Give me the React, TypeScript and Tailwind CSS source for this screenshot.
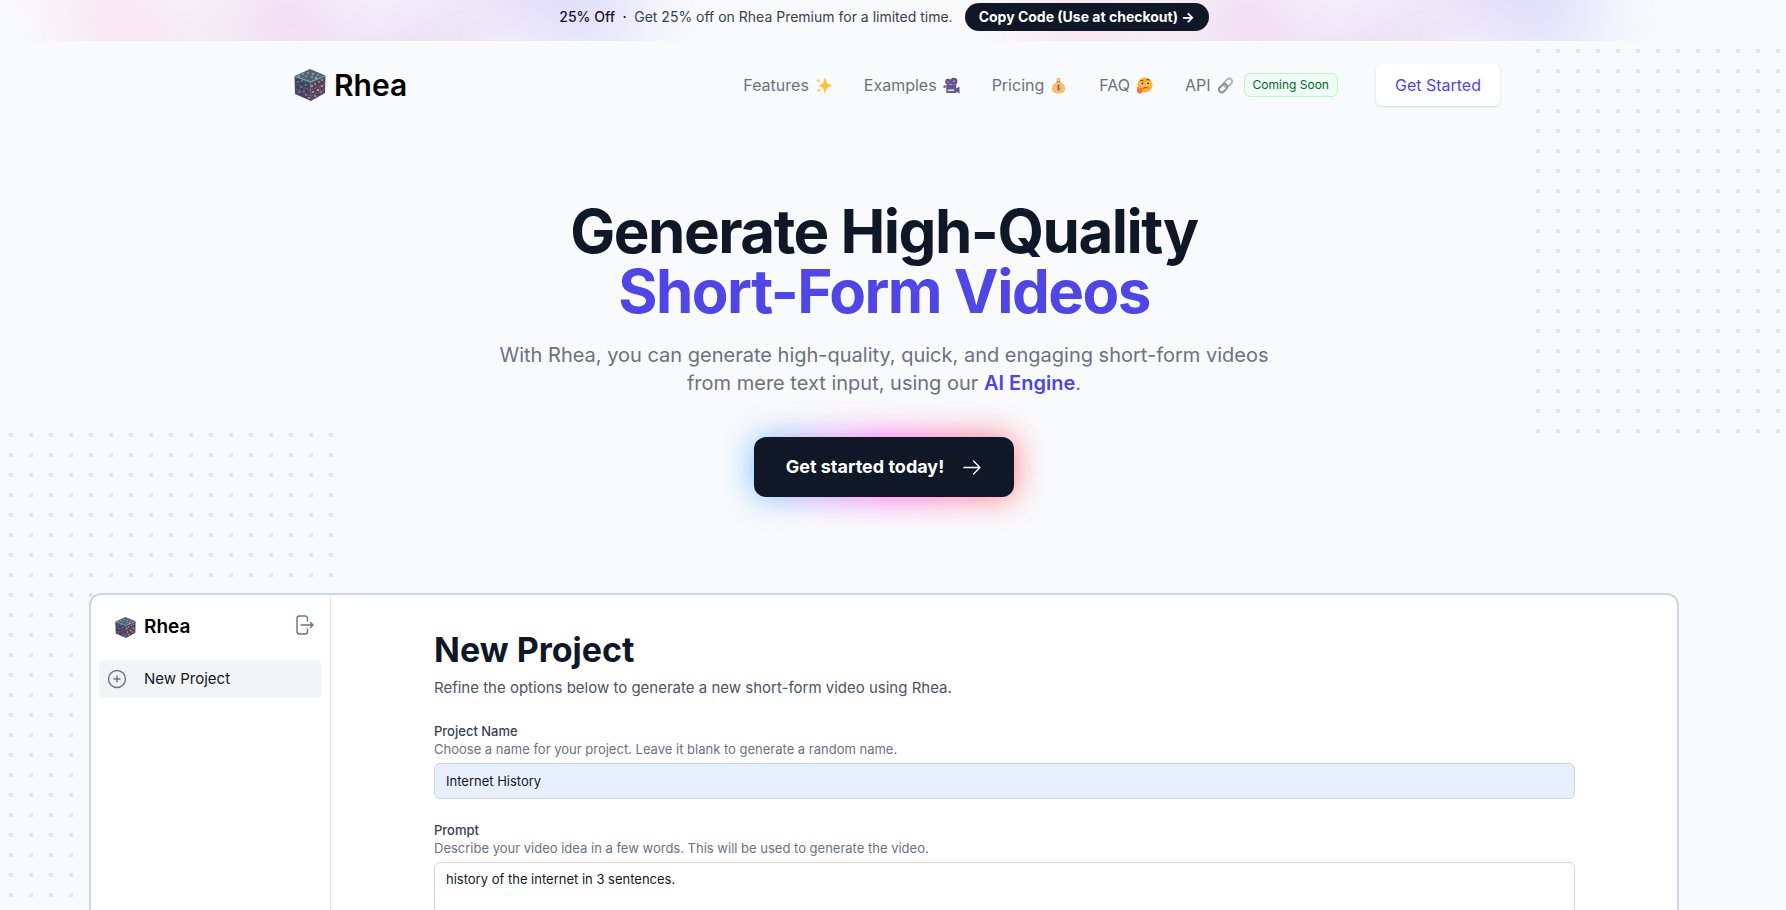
import { useState } from "react";

const blobShape =
    "aspect-[577/310] w-[577px] bg-linear-to-r from-[#ff80b5] to-[#9089fc] opacity-30 [clip-path:polygon(74.8%_41.9%,97.2%_73.2%,100%_34.9%,92.5%_0.4%,87.5%_0%,75%_28.6%,58.5%_54.6%,50.1%_56.8%,46.9%_44%,48.3%_17.4%,24.7%_53.9%,0%_27.9%,11.9%_74.2%,24.9%_54.1%,68.6%_100%,74.8%_41.9%)]";

const sparks = [
    [5, 7, "#6fb3bd"], [9, 5, "#7a9fae"], [14, 4, "#6d97a5"], [19, 5, "#8eb3c0"], [24, 6, "#62a9b5"],
    [12, 7, "#a3788f"], [18, 8, "#68a0b0"], [22, 9, "#9dbfc9"], [4, 13, "#7d6f9c"], [7, 18, "#5c7fa5"],
    [10, 22, "#8d6480"], [5, 23, "#6b7db0"], [12, 16, "#9a7090"], [12, 26, "#7f6fa0"], [18, 17, "#ff9a6b"],
    [21, 15, "#f27d9c"], [25, 13, "#b9808f"], [28, 17, "#ff8f6a"], [19, 23, "#f08ab0"], [24, 21, "#ffab7a"],
    [27, 23, "#c07a9a"], [21, 27, "#e8848a"], [8, 12, "#4c92a8"], [28, 11, "#63b7c2"], [15, 29, "#b97fae"],
] as const;

const Cube = (props: { className: string }) => (
    <svg viewBox="0 0 32 32" className={props.className} aria-hidden="true">
        <path d="M16 0 31.500 6.500 16.500 12.500 .5 7Z" fill="#566470" />
        <path d="M.5 7 16.500 12.500 17 32 1 25Z" fill="#46485f" />
        <path d="M31.500 6.500 16.500 12.500 17 32 31 24Z" fill="#584a63" />
        <path d="M1 7.500 16.500 13 31 7" fill="none" stroke="#6cb3be" strokeWidth="1" />
        <path d="M4 10v12M8 13v13M12 15v13M20 14v14M24 12v14M28 10v14" stroke="#2f3350" strokeWidth="1" />
        <path d="M2 15 16 21M2 20 16 27M31 15 17 21M31 20 17 27" stroke="#6f5c78" strokeWidth="1" />
        {sparks.map(([x, y, fill]) => (
            <circle key={`${x}-${y}`} cx={x} cy={y} r="1.100" fill={fill} />
        ))}
    </svg>
);

const Sparkles = () => (
    <svg viewBox="0 0 18 18" className="size-[17px]" aria-hidden="true">
        <path d="M11 1c.8 5 2 6.500 6.500 7.600v.8C13 10.500 11.800 12 11 17h-.8c-.8-5-2-6.500-5.700-7.600v-.8C8.200 7.500 9.400 6 10.200 1Z" fill="#ffc139" />
        <path d="M3.500 1c.3 1.700.8 2.200 2.500 2.700-1.700.5-2.200 1-2.500 2.700C3.200 4.700 2.700 4.200 1 3.700 2.700 3.200 3.200 2.700 3.500 1ZM4 11.500c.3 1.600.8 2.100 2.300 2.500C4.800 14.400 4.300 14.900 4 16.500c-.3-1.600-.8-2.100-2.300-2.500 1.500-.4 2-.9 2.300-2.500Z" fill="#ffc95a" />
    </svg>
);

const Camera = () => (
    <svg viewBox="0 0 18 18" className="size-[17px]" aria-hidden="true">
        <circle cx="5.500" cy="5" r="3.200" fill="#63518e" />
        <circle cx="11.500" cy="4.500" r="3.800" fill="#63518e" />
        <path d="M3.500 8h10.500v9H3.500ZM.5 9H3v2.500H.5ZM13.500 12.500l4-2.500v7.500l-4-2.500Z" fill="#63518e" />
        <circle cx="5.500" cy="5" r=".9" fill="#a99bc9" />
        <circle cx="11.500" cy="4.500" r="1" fill="#a99bc9" />
        <path d="M5 13h7v2h-7Z" fill="#d6cdea" />
    </svg>
);

const MoneyBag = () => (
    <svg viewBox="0 0 18 18" className="size-[17px]" aria-hidden="true">
        <path d="M7 1.500 9 .5l2 1-.5 3.500c3.500 1.500 5.500 4.500 5.500 7.500 0 3.500-2.500 5-7 5s-7-1.500-7-5C2 9.500 4 6.500 7.500 5Z" fill="#f5bd76" />
        <path d="M7 5h4" stroke="#b9803f" strokeWidth="1.300" />
        <path d="M10.700 9.500c-.5-.6-3-.8-3.200.6 0 1.500 3 .8 3 2.300 0 1.300-2.500 1.300-3.200.4M9 8v6.500" fill="none" stroke="#8a5a3c" strokeWidth=".9" />
    </svg>
);

const Thinking = () => (
    <svg viewBox="0 0 18 18" className="size-[17px]" aria-hidden="true">
        <circle cx="9.500" cy="8.500" r="8" fill="#ffb62e" />
        <path d="M4.500 4.500C5.500 3.500 7 3.500 7.800 4.500M11 3.300c1.200-1 2.700-.8 3.500.4" fill="none" stroke="#7a4a12" strokeWidth="1.100" />
        <ellipse cx="6.500" cy="7.200" rx="1.500" ry="1.700" fill="#fff" />
        <ellipse cx="12.500" cy="7.200" rx="1.500" ry="1.700" fill="#fff" />
        <circle cx="6.700" cy="7" r="1.100" fill="#3d2a1a" />
        <circle cx="12.700" cy="7" r="1.100" fill="#3d2a1a" />
        <path d="M8 11.800c1.500-.9 3-.8 4.500 0" fill="none" stroke="#7a4a12" strokeWidth="1.100" />
        <path d="M1.500 10.500c1-.8 1.800 0 2 1.500l5-.8c1.200 0 1.200 1.400 0 1.700l-2 .5c1.500 2-.5 4.300-3 4.100C1 17.300.5 14 1.500 10.500Z" fill="#f9763a" />
    </svg>
);

const ChainLink = () => (
    <svg viewBox="0 0 18 18" className="size-[17px]" aria-hidden="true">
        <g fill="none" strokeWidth="2">
            <rect x="6.500" y="3.200" width="10" height="6" rx="3" transform="rotate(-45 11.500 6.200)" stroke="#b4b4b4" />
            <rect x="1.500" y="8.800" width="10" height="6" rx="3" transform="rotate(-45 6.500 11.800)" stroke="#8f8f8f" />
        </g>
    </svg>
);

const navigation = [
    { name: "Features", icon: <Sparkles /> },
    { name: "Examples", icon: <Camera /> },
    { name: "Pricing", icon: <MoneyBag /> },
    { name: "FAQ", icon: <Thinking /> },
    { name: "API", icon: <ChainLink /> },
];

const Banner = () => (
    <div className="relative isolate overflow-hidden pt-[3px] pb-2.5 pr-4.5 flex items-center justify-center gap-x-3">
        <div className="absolute left-[calc(50%-841px)] top-1/2 -z-10 -translate-y-1/2 blur-2xl" aria-hidden="true">
            <div className={blobShape} />
        </div>
        <div className="absolute left-[calc(50%+119px)] top-1/2 -z-10 -translate-y-1/2 blur-2xl" aria-hidden="true">
            <div className={blobShape} />
        </div>
        <p className="text-sm text-gray-700">
            <strong className="font-medium text-gray-900">25% Off&nbsp; ·&nbsp; </strong>
            Get 25% off on Rhea Premium for a limited time.
        </p>
        <button className="rounded-full bg-gray-900 px-3.5 py-1 text-sm font-bold text-white">
            Copy Code (Use at checkout) <span aria-hidden="true">→</span>
        </button>
    </div>
);

const Header = () => (
    <header className="mx-auto flex max-w-7xl items-center justify-between pt-[23px] pl-[50px] pr-6">
        <a href="#" className="flex items-center gap-2">
            <Cube className="size-8" />
            <span className="text-3xl font-semibold text-black">Rhea</span>
        </a>
        <nav className="flex items-center gap-8">
            {navigation.map((item) => (
                <a key={item.name} href="#" className="flex items-center gap-1.5 text-gray-500">
                    {item.name}
                    {item.icon}
                    {item.name === "API" && (
                        <span className="ml-1 rounded-md border border-green-200 bg-green-50 px-2 py-0.5 text-xs leading-[18px] text-green-800">
                            Coming Soon
                        </span>
                    )}
                </a>
            ))}
            <a href="#" className="ml-1.5 rounded-md bg-white px-[19px] py-[9px] text-[#4f46e5] shadow-sm">
                Get Started
            </a>
        </nav>
    </header>
);

const Hero = () => (
    <div className="mx-auto flex flex-col items-center pt-[95px] text-center">
        <h1 className="text-6xl font-bold tracking-tight leading-none text-gray-900">
            Generate High-Quality
            <span className="block text-[#4f46e5]">Short-Form Videos</span>
        </h1>
        <p className="mt-5 max-w-[780px] text-xl leading-7 text-gray-500">
            With Rhea, you can generate high-quality, quick, and engaging short-form videos from mere text input, using our{" "}
            <span className="font-semibold text-[#4f46e5]">AI Engine</span>.
        </p>
        <div className="relative mt-10">
            <div className="absolute inset-0 rounded-xl bg-linear-to-r from-[#44bcff] via-[#ff44ec] to-[#ff675e] opacity-90 blur-lg" />
            <a href="#" className="relative flex h-15 items-center gap-4.5 rounded-xl bg-gray-900 px-8 text-lg font-bold text-white">
                Get started today!
                <svg viewBox="0 0 20 20" className="size-5" fill="none" stroke="currentColor" strokeWidth="1.300" strokeLinecap="round" strokeLinejoin="round">
                    <path d="M2 10.500h16M11.500 4l6.500 6.500-6.500 6.500" />
                </svg>
            </a>
        </div>
    </div>
);

const Sidebar = () => (
    <aside className="w-[240px] shrink-0 border-r border-gray-200 px-2 pt-3.5">
        <div className="flex h-9 items-center gap-2 pl-4 pr-[7px]">
            <Cube className="size-[21px]" />
            <span className="grow text-[19px] font-semibold text-black">Rhea</span>
            <button aria-label="Sign out" className="pb-1 text-gray-500">
                <svg viewBox="0 0 20 20" className="size-5" fill="none" stroke="currentColor" strokeWidth="1.400" strokeLinecap="round" strokeLinejoin="round">
                    <path d="M12.500 6V3.500A2.500 2.500 0 0 0 10 1H4.500A2.500 2.500 0 0 0 2 3.500v13A2.500 2.500 0 0 0 4.500 19H10a2.500 2.500 0 0 0 2.500-2.500V14M6 10h12M15.500 7.500 18 10l-2.500 2.500" />
                </svg>
            </button>
        </div>
        <a href="#" className="mt-[15px] flex h-[38px] items-center gap-[17px] rounded-md bg-gray-100 px-2 text-[15px] text-gray-900">
            <svg viewBox="0 0 20 20" className="size-5 text-gray-500" fill="none" stroke="currentColor" strokeWidth="1.400" strokeLinecap="round">
                <circle cx="10" cy="10" r="8.500" />
                <path d="M10 7v6M7 10h6" />
            </svg>
            New Project
        </a>
    </aside>
);

const ProjectForm = () => {
    const [name, setName] = useState("Internet History");
    const [prompt, setPrompt] = useState("history of the internet in 3 sentences.");

    return (
        <main className="grow pl-[103px] pr-[102px] pt-[35px]">
            <h2 className="text-[34px] font-bold leading-10 text-gray-900">New Project</h2>
            <p className="mt-1.5 text-[15px] leading-6 text-gray-600">Refine the options below to generate a new short-form video using Rhea.</p>
            <form className="mt-5.5 flex flex-col gap-[22px]">
                <div className="flex flex-col">
                    <label htmlFor="name" className="text-[13px] leading-[18px] font-medium text-gray-700">Project Name</label>
                    <p className="text-[13px] leading-[18px] text-gray-500">Choose a name for your project. Leave it blank to generate a random name.</p>
                    <input
                        id="name"
                        value={name}
                        onChange={(e) => setName(e.target.value)}
                        className="mt-[5px] h-9 rounded-md border border-gray-300 bg-[#e8f0fe] px-[11px] text-[13px] text-gray-900"
                    />
                </div>
                <div className="flex flex-col">
                    <label htmlFor="prompt" className="text-[13px] leading-[18px] font-medium text-gray-700">Prompt</label>
                    <p className="text-[13px] leading-[18px] text-gray-500">Describe your video idea in a few words. This will be used to generate the video.</p>
                    <textarea
                        id="prompt"
                        rows={5}
                        value={prompt}
                        onChange={(e) => setPrompt(e.target.value)}
                        className="mt-[5px] resize-none rounded-md border border-gray-300 bg-white px-[11px] py-1.5 text-[13px] leading-5 text-gray-900"
                    />
                </div>
            </form>
        </main>
    );
};

const App = () => (
    <div className="h-screen overflow-hidden bg-[#f9fafc] font-['Inter',sans-serif]">
        <Banner />
        <div className="relative isolate overflow-hidden pr-4.5">
            <svg className="absolute left-0 top-[392px] -z-10 h-[784px] w-[333px]" aria-hidden="true">
                <pattern id="dots-left" x="9" y="0" width="20" height="20" patternUnits="userSpaceOnUse">
                    <rect width="4" height="4" fill="#e5e7eb" />
                </pattern>
                <rect width="100%" height="100%" fill="url(#dots-left)" />
            </svg>
            <svg className="absolute right-0 top-0 -z-10 h-[392px] w-[250px]" aria-hidden="true">
                <pattern id="dots-right" x="0" y="8" width="20" height="20" patternUnits="userSpaceOnUse">
                    <rect width="4" height="4" fill="#e5e7eb" />
                </pattern>
                <rect width="100%" height="100%" fill="url(#dots-right)" />
            </svg>
            <Header />
            <Hero />
            <div className="mx-[89px] mt-24 flex min-h-[600px] rounded-xl border-2 border-gray-300 bg-white">
                <Sidebar />
                <ProjectForm />
            </div>
        </div>
    </div>
);

export default App;
